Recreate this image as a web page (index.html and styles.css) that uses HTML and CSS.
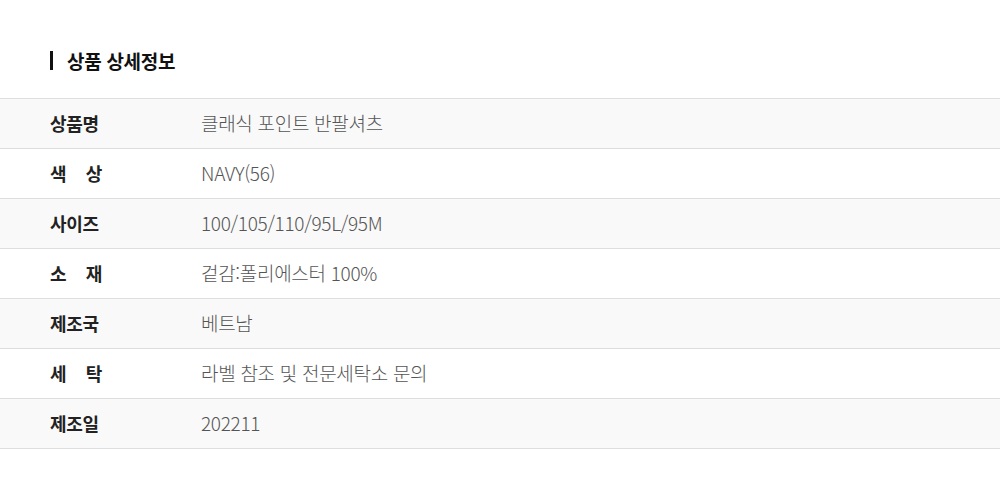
FILE: index.html
```html
<!DOCTYPE html>
<html lang="ko">
<head>
<meta charset="utf-8">
<link rel="stylesheet" href="styles.css">
</head>
<body>
<section class="detail">
  <h2 class="title">상품 상세정보</h2>
  <table class="info">
    <tr><th><span class="lbl">상품명</span></th><td>클래식 포인트 반팔셔츠</td></tr>
    <tr><th><span class="lbl">색 상</span></th><td>NAVY(56)</td></tr>
    <tr><th><span class="lbl">사이즈</span></th><td>100/105/110/95L/95M</td></tr>
    <tr><th><span class="lbl">소 재</span></th><td>겉감:폴리에스터 100%</td></tr>
    <tr><th><span class="lbl">제조국</span></th><td>베트남</td></tr>
    <tr><th><span class="lbl">세 탁</span></th><td>라벨 참조 및 전문세탁소 문의</td></tr>
    <tr><th><span class="lbl">제조일</span></th><td>202211</td></tr>
  </table>
</section>
</body>
</html>
```
FILE: styles.css
```css
html, body {
  margin: 0;
  padding: 0;
  background: #fff;
}
body {
  font-family: "Noto Sans CJK KR", "Noto Sans", sans-serif;
  color: #222;
}
.detail {
  padding-top: 51px;
}
.title {
  margin: 0 0 28px 50px;
  padding-left: 14px;
  border-left: 3px solid #111;
  font-size: 19px;
  font-weight: 700;
  line-height: 19px;
  height: 19px;
  letter-spacing: -0.3px;
  color: #111;
  display: flex;
  align-items: center;
}
.info {
  width: 100%;
  border-collapse: collapse;
  border-top: 1px solid #dedede;
}
.info tr {
  border-bottom: 1px solid #dedede;
}
.info tr:nth-child(odd) {
  background: #f9f9f9;
}
.info th, .info td {
  height: 47px;
  padding: 0 0 2px;
  text-align: left;
  vertical-align: middle;
}
.info th {
  width: 201px;
  padding-left: 50px;
  box-sizing: border-box;
  font-size: 18px;
  font-weight: 700;
  color: #222;
}
.lbl {
  display: inline-block;
  width: 52px;
  text-align-last: justify;
  letter-spacing: -0.3px;
}
.info td {
  font-size: 19px;
  font-weight: 300;
  color: #555;
  letter-spacing: -0.3px;
}
```
